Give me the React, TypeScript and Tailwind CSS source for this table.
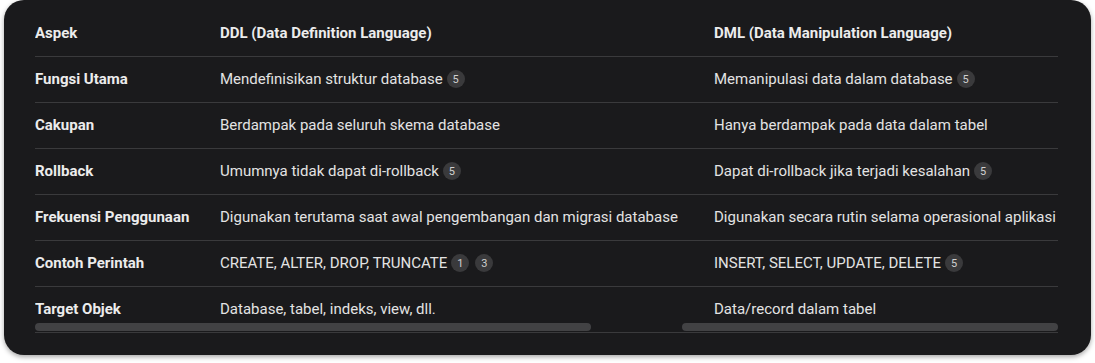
import React from "react";

type Cell = { text: string; refs?: number[] };
type Row = { label: string; ddl: Cell; dml: Cell };

const rows: Row[] = [
  {
    label: "Fungsi Utama",
    ddl: { text: "Mendefinisikan struktur database", refs: [5] },
    dml: { text: "Memanipulasi data dalam database", refs: [5] },
  },
  {
    label: "Cakupan",
    ddl: { text: "Berdampak pada seluruh skema database" },
    dml: { text: "Hanya berdampak pada data dalam tabel" },
  },
  {
    label: "Rollback",
    ddl: { text: "Umumnya tidak dapat di-rollback", refs: [5] },
    dml: { text: "Dapat di-rollback jika terjadi kesalahan", refs: [5] },
  },
  {
    label: "Frekuensi Penggunaan",
    ddl: { text: "Digunakan terutama saat awal pengembangan dan migrasi database" },
    dml: { text: "Digunakan secara rutin selama operasional aplikasi" },
  },
  {
    label: "Contoh Perintah",
    ddl: { text: "CREATE, ALTER, DROP, TRUNCATE", refs: [1, 3] },
    dml: { text: "INSERT, SELECT, UPDATE, DELETE", refs: [5] },
  },
  {
    label: "Target Objek",
    ddl: { text: "Database, tabel, indeks, view, dll." },
    dml: { text: "Data/record dalam tabel" },
  },
];

function Ref({ n }: { n: number }) {
  return (
    <span className="inline-flex h-[18px] w-[18px] items-center justify-center rounded-full bg-[#3a3a3c] text-[11px] leading-none text-[#d0d0d0]">
      {n}
    </span>
  );
}

function CellContent({ cell }: { cell: Cell }) {
  return (
    <span className="inline-flex items-center whitespace-nowrap">
      <span>{cell.text}</span>
      {cell.refs && (
        <span className="ml-[4px] inline-flex gap-[6px]">
          {cell.refs.map((r) => (
            <Ref key={r} n={r} />
          ))}
        </span>
      )}
    </span>
  );
}

export default function App() {
  return (
    <div
      className="h-[363px] w-[1095px] bg-white px-[4px]"
      style={{ fontFamily: "Roboto, 'Noto Sans', sans-serif" }}
    >
      <div className="h-[355px] w-[1087px] rounded-[20px] bg-[#1a1a1c] pl-[31px] pt-[10px] shadow-[0_2px_5px_rgba(0,0,0,0.35)]">
        <div className="relative w-[1023px] overflow-hidden">
          <table className="w-[1079px] table-fixed border-collapse text-[15px] text-[#e3e3e3]">
            <colgroup>
              <col className="w-[185px]" />
              <col className="w-[494px]" />
              <col className="w-[400px]" />
            </colgroup>
            <thead>
              <tr className="h-[46px] border-b border-[#3a3a3c]">
                <th className="p-0 text-left font-bold text-[#ececec]">Aspek</th>
                <th className="p-0 text-left font-bold text-[#ececec]">DDL (Data Definition Language)</th>
                <th className="p-0 text-left font-bold text-[#ececec]">DML (Data Manipulation Language)</th>
              </tr>
            </thead>
            <tbody>
              {rows.map((row) => (
                <tr key={row.label} className="h-[46px] border-b border-[#3a3a3c]">
                  <td className="p-0 font-bold whitespace-nowrap text-[#ececec]">{row.label}</td>
                  <td className="p-0">
                    <CellContent cell={row.ddl} />
                  </td>
                  <td className="p-0">
                    <CellContent cell={row.dml} />
                  </td>
                </tr>
              ))}
            </tbody>
          </table>
          {/* overlay horizontal scrollbar */}
          <div className="absolute left-0 top-[313px] flex w-full">
            <div className="h-[8px] w-[556px] rounded-full bg-[#424244]" />
            <div className="ml-[91px] h-[8px] w-[376px] rounded-full bg-[#424244]" />
          </div>
        </div>
      </div>
    </div>
  );
}
